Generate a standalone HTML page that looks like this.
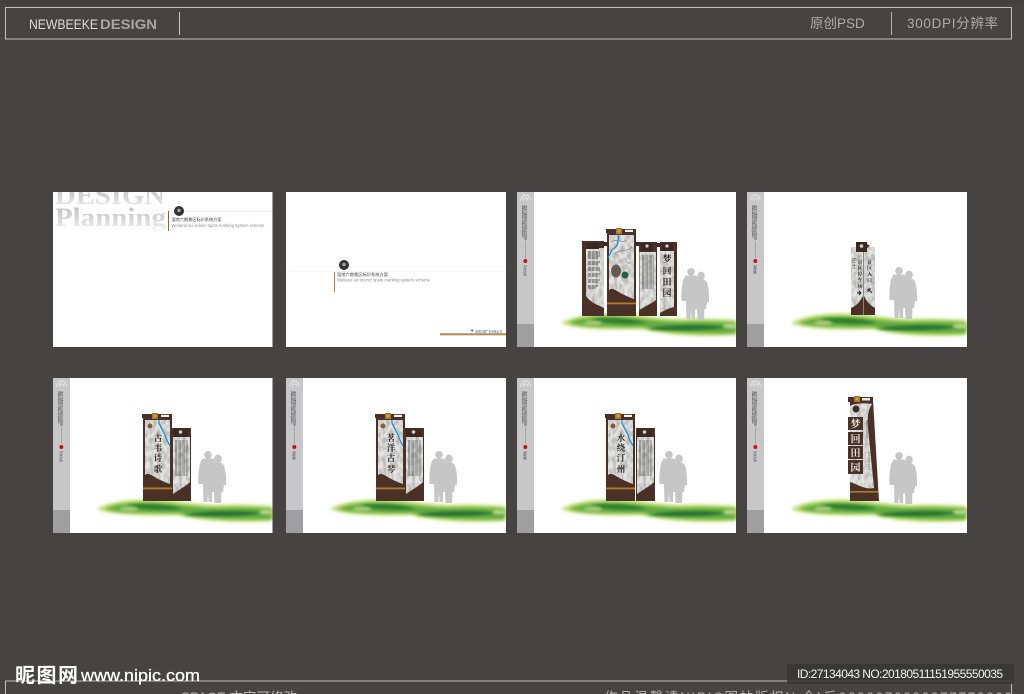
<!DOCTYPE html>
<html lang="zh">
<head>
<meta charset="utf-8">
<title>NEWBEEKE DESIGN</title>
<style>
html,body{margin:0;padding:0;width:1024px;height:694px;overflow:hidden;background:#474342}
svg{display:block}
text{font-family:"Liberation Sans","Noto Sans CJK SC",sans-serif}
.cal{font-family:"Noto Serif CJK SC","Liberation Serif",serif;font-weight:700;fill:#2c2320;text-anchor:middle}
.calw{font-family:"Noto Serif CJK SC","Liberation Serif",serif;font-weight:700;fill:#e9e6df;text-anchor:middle}
.sd{font-size:2.800px;fill:#444}
</style>
</head>
<body>
<svg width="1024" height="694" viewBox="0 0 1024 694" xmlns="http://www.w3.org/2000/svg">
<defs>
<linearGradient id="fadeA" x1="0" y1="0" x2="0" y2="1"><stop offset="0" stop-color="#b4b4b4"/><stop offset="1" stop-color="#efefef"/></linearGradient>
<linearGradient id="fadeB" x1="0" y1="0" x2="0" y2="1"><stop offset="0" stop-color="#bcbcbc"/><stop offset=".65" stop-color="#dcdcdc"/><stop offset="1" stop-color="#fafafa"/></linearGradient>
<filter id="stone" x="0" y="0" width="100%" height="100%" color-interpolation-filters="sRGB">
<feTurbulence type="fractalNoise" baseFrequency=".28 .16" numOctaves="2" seed="4" result="n"/>
<feColorMatrix in="n" type="matrix" values="0 0 0 0 .62  0 0 0 0 .62  0 0 0 0 .61  1.500 0 0 0 -.5" result="m"/>
<feComposite in="m" in2="SourceAlpha" operator="in" result="c"/>
<feMerge><feMergeNode in="SourceGraphic"/><feMergeNode in="c"/></feMerge>
</filter>
<filter id="b1" x="-20%" y="-80%" width="140%" height="260%"><feGaussianBlur stdDeviation="1.300"/></filter>
<filter id="b2" x="-20%" y="-80%" width="140%" height="260%"><feGaussianBlur stdDeviation="1.500"/></filter>
<filter id="b3" x="-5%" y="-5%" width="110%" height="110%"><feGaussianBlur stdDeviation=".35"/></filter>

<g id="grass">
<path d="M44 131C60 121 95 120 120 123C135 125 150 127 165 127C185 126 205 127 219 128V143C190 145 150 144 125 137C100 138 60 138 44 131Z" fill="#bcdc6c" filter="url(#b2)"/>
<path d="M52 131C66 124 95 124 118 126C132 128 150 130 165 130C185 129 205 130 219 131V141C190 142 150 141 126 135C100 135 65 135 52 131Z" fill="#62aa42" filter="url(#b2)"/>
<path d="M74 127C90 125 115 126 130 131C112 133 85 132 74 127Z" fill="#33802f" filter="url(#b1)"/>
<path d="M130 137C150 132 190 132 210 135C195 139 150 139 130 137Z" fill="#2a7530" filter="url(#b1)"/>
<ellipse cx="76" cy="131" rx="9" ry="2.400" fill="#a7c879" filter="url(#b1)"/>
<ellipse cx="214" cy="134" rx="8" ry="2.400" fill="#b6d488" filter="url(#b1)"/>
</g>

<g id="people" fill="#c6c6c6" filter="url(#b3)">
<circle cx="10" cy="3.800" r="3.800"/>
<path d="M5 7.500H15C17 8.500 18 14 18 20L17 33H14.500L14 51H10.600L10 42L9.400 51H5.500L5 33H.5C0 24 1 10 5 7.500Z"/>
<ellipse cx="20" cy="8" rx="3.800" ry="4.500"/>
<path d="M16 12C19 11 23 11 25 13C27.500 16 28.500 26 28 34H26L25 41H23.500L23 52H16.500L16 41H13.500C14 32 15 18 16 12Z"/>
</g>

<g id="logo" fill="none" stroke="#e8e8e8" stroke-width="1">
<path d="M3.500 8.500C5.500 1 11.500 1 13.500 8.500M6 8.500C7 5 10 5 11 8.500"/>
</g>

<g id="mainSign">
<rect x="0" y="3" width="29" height="85" fill="#4a3027"/>
<path d="M-1 1H29V5H-1Z" fill="#4a3027"/>
<rect x="9" y="0" width="6" height="6" fill="#a57b32"/>
<circle cx="12" cy="3" r="1.500" fill="#d9a23b"/>
<rect x="18" y="1.800" width="8" height="2.200" fill="#f3f3f3"/>
<path d="M2 7H27V71C21 69 15 66 10 63C7 61 4 60 2 62Z" fill="#e4e4e2" filter="url(#stone)"/>
<rect x="0" y="74.500" width="29" height="1.800" fill="#b07c2a"/>
</g>

<g id="subSign">
<rect x="0" y="0" width="19" height="73" fill="#4a3027"/>
<path d="M1 9H18V54C14 58 8 61 1 66Z" fill="#e4e4e2" filter="url(#stone)"/>
<rect x="1" y="1" width="15" height="8" fill="#3c2822"/>
<circle cx="8.500" cy="4" r="1.800" fill="#d6d0c6"/>
<path d="M3 13H16M3 15H16M3 17H16M3 19H16M3 21H16M3 23H16M3 25H16M3 27H16M3 29H16M3 31H16M3 33H16M3 35H16M3 37H16M3 39H16M3 41H16M3 43H16M3 45H16M3 47H16" stroke="#4e4e4c" stroke-width="1" stroke-dasharray="2 .6 1 .5" opacity=".85" fill="none"/>
</g>
</defs>

<rect width="1024" height="694" fill="#474342"/>
<rect x="0" y="0" width="1024" height="4" fill="#433f3e"/>

<!-- header -->
<rect x="5.500" y="7.500" width="1006" height="31.500" fill="none" stroke="#c2c0bd" stroke-width="1"/>
<text x="29" y="29" font-size="14" fill="#dcdbd8" textLength="69" lengthAdjust="spacingAndGlyphs">NEWBEEKE</text>
<text x="100" y="29" font-size="14" font-weight="700" fill="#a8a6a3" textLength="57" lengthAdjust="spacingAndGlyphs">DESIGN</text>
<rect x="179" y="12" width="1" height="23" fill="#c9c7c4"/>
<text x="810" y="28" font-size="13.500" fill="#aeacaa">原创PSD</text>
<rect x="891" y="12" width="1" height="23" fill="#b5b3b0"/>
<text x="907" y="28" font-size="13.500" fill="#aeacaa" textLength="91">300DPI分辨率</text>

<!-- Card 1 -->
<svg x="53" y="192" width="219.500" height="155" viewBox="0 0 219.500 155">
<rect width="220" height="155" fill="#fff"/>
<text x="2" y="12" style="font-family:'Liberation Serif',serif" font-size="26" font-weight="700" fill="url(#fadeA)" textLength="110" lengthAdjust="spacingAndGlyphs">DESIGN</text>
<text x="2" y="34" style="font-family:'Liberation Serif',serif" font-size="26" font-weight="700" fill="url(#fadeB)" textLength="111" lengthAdjust="spacingAndGlyphs">Planning</text>
<rect x="115" y="19.500" width="105" height=".6" fill="#e6e6e6"/>
<rect x="115" y="19" width="1" height="20" fill="#b3532e"/>
<circle cx="126" cy="19" r="5" fill="#353232"/>
<circle cx="126" cy="18.500" r="1.700" fill="#a9a6a2"/>
<text x="118.500" y="29" font-size="4.200" fill="#3b3b3b" textLength="50">湿地六期景区标识系统方案</text>
<text x="118.500" y="35" font-size="4.200" fill="#8a8a8a" textLength="93">Wetland six scenic spots marking system scheme</text>
</svg>

<!-- Card 2 -->
<svg x="286" y="192" width="220" height="155" viewBox="0 0 220 155">
<rect width="220" height="155" fill="#fff"/>
<rect x="0" y="79" width="220" height=".7" fill="#eeeeee"/>
<rect x="48" y="80" width="1" height="20" fill="#b9803c"/>
<circle cx="58" cy="73" r="5" fill="#353232"/>
<circle cx="58" cy="72.500" r="1.700" fill="#a9a6a2"/>
<text x="51" y="84" font-size="4.200" fill="#3b3b3b" textLength="51">湿地六期景区标识系统方案</text>
<text x="51" y="89.500" font-size="4.200" fill="#8a8a8a" textLength="93">Wetland six scenic spots marking system scheme</text>
<rect x="154" y="141" width="66" height=".8" fill="#9a9a9a"/>
<rect x="154" y="142" width="66" height="1.300" fill="#bd8a3f"/>
<path d="M184.500 138.500l2-1.500 1 3z" fill="#35688f"/>
<text x="189" y="140.500" font-size="2.700" fill="#444" textLength="27">湿地六期广告有限公司</text>
</svg>

<!-- Card 3 -->
<svg x="517" y="192" width="219" height="155" viewBox="0 0 219 155">
<rect width="219" height="155" fill="#fff"/>
<rect width="17" height="155" fill="#c7c7c9"/>
<rect y="132" width="17" height="23" fill="#9f9fa1"/>
<use href="#logo"/>
<text class="sd" transform="translate(7.500 13) rotate(90)" textLength="35">湿地六期景区标识系统方案系统</text>
<text class="sd" transform="translate(4.800 13) rotate(90)" textLength="33">Wetland six scenic spots marking system</text>
<rect x="8" y="49" width=".6" height="17" fill="#8e8e8e"/>
<circle cx="8.300" cy="69" r="2" fill="#c5121a"/>
<text class="sd" transform="translate(7 73) rotate(90)" textLength="11">系统方案</text>
<use href="#grass"/>
<!-- left panel -->
<rect x="65" y="49" width="22" height="75" fill="#4a3027"/>
<path d="M69 56H87V116C82 113 75 112 69 104Z" fill="#e4e4e2" filter="url(#stone)"/>
<rect x="69" y="51" width="13" height="6" fill="#3c2822"/>
<path d="M71 60H83M71 62H83M71 64H83M71 66H81M71 70H83M71 72H81M71 76H83M71 78H83M71 82H83M71 84H81M71 88H83M71 90H81M71 94H81M71 96H79" stroke="#4a4a48" stroke-width="1" stroke-dasharray="3 .7" fill="none"/>
<rect x="87" y="50" width="3" height="4" fill="#3c2822"/>
<!-- centre panel -->
<use href="#mainSign" x="90" y="36"/>
<path d="M94 50C100 46 106 52 110 48M97 62C103 56 110 62 115 54M108 66C110 72 112 72 114 70" fill="none" stroke="#8c8c8a" stroke-width=".8"/>
<path d="M101 42C102 46 101 50 100 53C99 56 95 56 94 60C93 62 92 64 91 66" fill="none" stroke="#1d8fd5" stroke-width="1.300"/>
<ellipse cx="99" cy="79" rx="5" ry="6.500" fill="#675a52"/>
<circle cx="108" cy="83" r="3.500" fill="#265f3e"/>
<rect x="119" y="50" width="3" height="4" fill="#3c2822"/>
<!-- third panel -->
<rect x="122" y="50" width="18" height="74" fill="#4a3027"/>
<path d="M122.500 60H139V108C134 112 128 114 122.500 118Z" fill="#e4e4e2" filter="url(#stone)"/>
<rect x="124" y="51" width="12" height="8" fill="#3c2822"/>
<circle cx="130" cy="54" r="1.600" fill="#d6d0c6"/>
<path d="M125 64H137M125 66H137M125 68H137M125 70H137M125 72H137M125 74H137M125 76H137M125 78H137M125 80H137M125 82H137M125 84H137M125 86H137M125 88H137M125 90H137M125 92H137M125 94H137M125 96H137" stroke="#4e4e4c" stroke-width="1" stroke-dasharray="2 .6 1 .5" fill="none" opacity=".85"/>
<rect x="140" y="51" width="3" height="4" fill="#3c2822"/>
<!-- fourth panel -->
<rect x="143" y="50" width="17" height="74" fill="#4a3027"/>
<path d="M143 59H157V115C152 116 148 118 143 121Z" fill="#e4e4e2" filter="url(#stone)"/>
<rect x="145" y="51" width="11" height="8" fill="#3c2822"/>
<circle cx="150" cy="54" r="1.600" fill="#d6d0c6"/>
<text class="cal" x="150" y="70" font-size="9">梦</text>
<text class="cal" x="150" y="82" font-size="9">回</text>
<text class="cal" x="150" y="93" font-size="9">田</text>
<text class="cal" x="150" y="104" font-size="9">园</text>
<use href="#people" x="164" y="76"/>
</svg>

<!-- Card 4 -->
<svg x="747" y="192" width="220" height="155" viewBox="0 0 220 155">
<rect width="220" height="155" fill="#fff"/>
<rect width="17" height="155" fill="#c7c7c9"/>
<rect y="132" width="17" height="23" fill="#9f9fa1"/>
<use href="#logo"/>
<text class="sd" transform="translate(7.500 13) rotate(90)" textLength="35">湿地六期景区标识系统方案系统</text>
<text class="sd" transform="translate(4.800 13) rotate(90)" textLength="33">Wetland six scenic spots marking system</text>
<rect x="8" y="49" width=".6" height="17" fill="#8e8e8e"/>
<circle cx="8.300" cy="69" r="2" fill="#d2111a"/>
<text class="sd" transform="translate(7 73) rotate(90)" textLength="9">系统方案</text>
<use href="#grass"/>
<path d="M104 55H116V123H104Z" fill="#e4e4e2" filter="url(#stone)"/>
<path d="M117 55H128V123H117Z" fill="#e4e4e2" filter="url(#stone)"/>
<rect x="116" y="55" width="1" height="68" fill="#8a8582"/>
<path d="M104 123V116C109 114 113 110 116 104V123ZM117 104C120 110 124 114 128 116V123H117Z" fill="#4a3027"/>
<rect x="109" y="50" width="11" height="10" fill="#3c2822"/>
<path d="M120 52l3 2-3 2z" fill="#3c2822"/>
<circle cx="114.500" cy="54" r="1.800" fill="#d6d0c6"/>
<text x="107.500" y="70" font-size="4.600" fill="#3a3a3a" text-anchor="middle">巴</text>
<text x="107.500" y="76" font-size="4.600" fill="#3a3a3a" text-anchor="middle">士</text>
<text class="cal" x="113" y="72" font-size="5">景</text>
<text class="cal" x="113" y="78" font-size="5">区</text>
<text class="cal" x="113" y="84" font-size="5">停</text>
<text class="cal" x="113" y="90" font-size="5">车</text>
<text class="cal" x="113" y="96" font-size="5">场</text>
<text class="cal" x="122.500" y="72" font-size="5">景</text>
<text class="cal" x="122.500" y="78" font-size="5">区</text>
<text class="cal" x="122.500" y="84" font-size="5">入</text>
<text class="cal" x="122.500" y="90" font-size="5">口</text>
<path d="M112 99l2 2-2 2M110 101h4" stroke="#222" stroke-width="1" fill="none"/>
<path d="M121 97h3M121 97v3M121 97l4 4" stroke="#222" stroke-width="1" fill="none"/>
<use href="#people" x="142" y="75"/>
</svg>

<!-- Card 5 -->
<svg x="53" y="378" width="219.500" height="155" viewBox="0 0 219.500 155">
<rect width="220" height="155" fill="#fff"/>
<rect width="17" height="155" fill="#c7c7c9"/>
<rect y="132" width="17" height="23" fill="#9f9fa1"/>
<use href="#logo"/>
<text class="sd" transform="translate(7.500 13) rotate(90)" textLength="35">湿地六期景区标识系统方案系统</text>
<text class="sd" transform="translate(4.800 13) rotate(90)" textLength="33">Wetland six scenic spots marking system</text>
<rect x="8" y="49" width=".6" height="17" fill="#8e8e8e"/>
<circle cx="8.300" cy="69" r="2" fill="#c5121a"/>
<text class="sd" transform="translate(7 73) rotate(90)" textLength="11">系统方案</text>
<use href="#grass"/>
<use href="#mainSign" x="90" y="35"/>
<path d="M106 42C105 46 108 48 109 51C110 54 111 54 112 57C113 61 115 64 117 68" fill="none" stroke="#1d8fd5" stroke-width="1.300"/>
<circle cx="97" cy="48" r="2.500" fill="#8a5a35"/>
<text class="cal" x="105" y="63" font-size="8.500">古</text>
<text class="cal" x="105" y="73" font-size="8.500">韦</text>
<text class="cal" x="105" y="83" font-size="8.500">诗</text>
<text class="cal" x="105" y="94" font-size="8.500">歌</text>
<use href="#subSign" x="119" y="50"/>
<use href="#people" x="145" y="73"/>
</svg>

<!-- Card 6 -->
<svg x="286" y="378" width="220" height="155" viewBox="0 0 220 155">
<rect width="220" height="155" fill="#fff"/>
<rect width="17" height="155" fill="#c7c7c9"/>
<rect y="132" width="17" height="23" fill="#9f9fa1"/>
<use href="#logo"/>
<text class="sd" transform="translate(7.500 13) rotate(90)" textLength="35">湿地六期景区标识系统方案系统</text>
<text class="sd" transform="translate(4.800 13) rotate(90)" textLength="33">Wetland six scenic spots marking system</text>
<rect x="8" y="49" width=".6" height="17" fill="#8e8e8e"/>
<circle cx="8.300" cy="69" r="2" fill="#c5121a"/>
<text class="sd" transform="translate(7 73) rotate(90)" textLength="9">系统方案</text>
<use href="#grass"/>
<use href="#mainSign" x="90" y="35"/>
<path d="M106 42C105 46 108 48 109 51C110 54 111 54 112 57C113 61 115 64 117 68" fill="none" stroke="#1d8fd5" stroke-width="1.300"/>
<circle cx="97" cy="48" r="2.500" fill="#8a5a35"/>
<text class="cal" x="105" y="63" font-size="8.500">茗</text>
<text class="cal" x="105" y="73" font-size="8.500">洋</text>
<text class="cal" x="105" y="83" font-size="8.500">古</text>
<text class="cal" x="105" y="94" font-size="8.500">琴</text>
<use href="#subSign" x="119" y="50"/>
<use href="#people" x="143" y="73"/>
</svg>

<!-- Card 7 -->
<svg x="517" y="378" width="219" height="155" viewBox="0 0 219 155">
<rect width="219" height="155" fill="#fff"/>
<rect width="17" height="155" fill="#c7c7c9"/>
<rect y="132" width="17" height="23" fill="#9f9fa1"/>
<use href="#logo"/>
<text class="sd" transform="translate(7.500 13) rotate(90)" textLength="35">湿地六期景区标识系统方案系统</text>
<text class="sd" transform="translate(4.800 13) rotate(90)" textLength="33">Wetland six scenic spots marking system</text>
<rect x="8" y="49" width=".6" height="17" fill="#8e8e8e"/>
<circle cx="8.300" cy="69" r="2" fill="#c5121a"/>
<text class="sd" transform="translate(7 73) rotate(90)" textLength="9">系统方案</text>
<use href="#grass"/>
<use href="#mainSign" x="89" y="35"/>
<path d="M105 42C104 46 107 48 108 51C109 54 110 54 111 57C112 61 114 64 116 68" fill="none" stroke="#1d8fd5" stroke-width="1.300"/>
<circle cx="96" cy="48" r="2.500" fill="#8a5a35"/>
<text class="cal" x="104" y="63" font-size="8.500">水</text>
<text class="cal" x="104" y="73" font-size="8.500">绕</text>
<text class="cal" x="104" y="83" font-size="8.500">汀</text>
<text class="cal" x="104" y="94" font-size="8.500">州</text>
<use href="#subSign" x="119" y="50"/>
<use href="#people" x="142" y="73"/>
</svg>

<!-- Card 8 -->
<svg x="747" y="378" width="220" height="155" viewBox="0 0 220 155">
<rect width="220" height="155" fill="#fff"/>
<rect width="17" height="155" fill="#c7c7c9"/>
<rect y="132" width="17" height="23" fill="#9f9fa1"/>
<use href="#logo"/>
<text class="sd" transform="translate(7.500 13) rotate(90)" textLength="35">湿地六期景区标识系统方案系统</text>
<text class="sd" transform="translate(4.800 13) rotate(90)" textLength="33">Wetland six scenic spots marking system</text>
<rect x="8" y="49" width=".6" height="17" fill="#8e8e8e"/>
<circle cx="8.300" cy="69" r="2" fill="#d2111a"/>
<text class="sd" transform="translate(7 73) rotate(90)" textLength="11">系统方案</text>
<use href="#grass"/>
<path d="M103 22H126L132 123H103Z" fill="#4a3027"/>
<path d="M101 19H126V24H101Z" fill="#4a3027"/>
<rect x="107" y="18" width="6" height="6" fill="#a57b32"/>
<circle cx="110" cy="21" r="1.500" fill="#d9a23b"/>
<rect x="115" y="20" width="8" height="2.500" fill="#ece8e2"/>
<path d="M103 28C108 25 118 25 125 26C121 32 120 40 121 50L127 110C118 112 110 106 103 104Z" fill="#e4e4e2" filter="url(#stone)"/>
<circle cx="109" cy="31" r="3.500" fill="#3a2c27"/>
<rect x="101" y="39" width="15" height="13" fill="#4a3027"/>
<rect x="101" y="54" width="15" height="13" fill="#4a3027"/>
<rect x="101" y="68" width="15" height="13" fill="#4a3027"/>
<rect x="101" y="82" width="15" height="14" fill="#4a3027"/>
<text class="calw" x="108.500" y="49.500" font-size="10">梦</text>
<text class="calw" x="108.500" y="64.500" font-size="10">回</text>
<text class="calw" x="108.500" y="78.500" font-size="10">田</text>
<text class="calw" x="108.500" y="93" font-size="10">园</text>
<path d="M120 42V60M122 74V92" stroke="#666" stroke-width="1" stroke-dasharray="1.500 .8" fill="none"/>
<rect x="103" y="113" width="28" height="1.600" fill="#b07c2a"/>
<use href="#people" x="142" y="74"/>
</svg>

<!-- bottom frame -->
<rect x="5.500" y="681" width="1006" height="20" fill="none" stroke="#bebcb9" stroke-width="1"/>
<text x="181" y="702" font-size="13.500" fill="#b5b3b0">SPACE 文字可修改</text>
<text x="604" y="702" font-size="13.500" fill="#b5b3b0" textLength="408">作品温馨请NIPIC图站版权N:全)后0000070000077770000</text>

<!-- watermark -->
<text x="15" y="682" font-size="20" font-weight="700" fill="#fff" textLength="63" style="font-family:'Noto Sans CJK SC',sans-serif">昵图网</text>
<text x="81" y="681" font-size="17" fill="#fff" stroke="#fff" stroke-width=".3" textLength="119" lengthAdjust="spacingAndGlyphs">www.nipic.com</text>
<rect x="787" y="664" width="227" height="20" fill="#383535" opacity=".85"/>
<text x="797" y="678" font-size="12" fill="#f2f2f2" textLength="206">ID:27134043 NO:20180511151955550035</text>
</svg>
</body>
</html>
